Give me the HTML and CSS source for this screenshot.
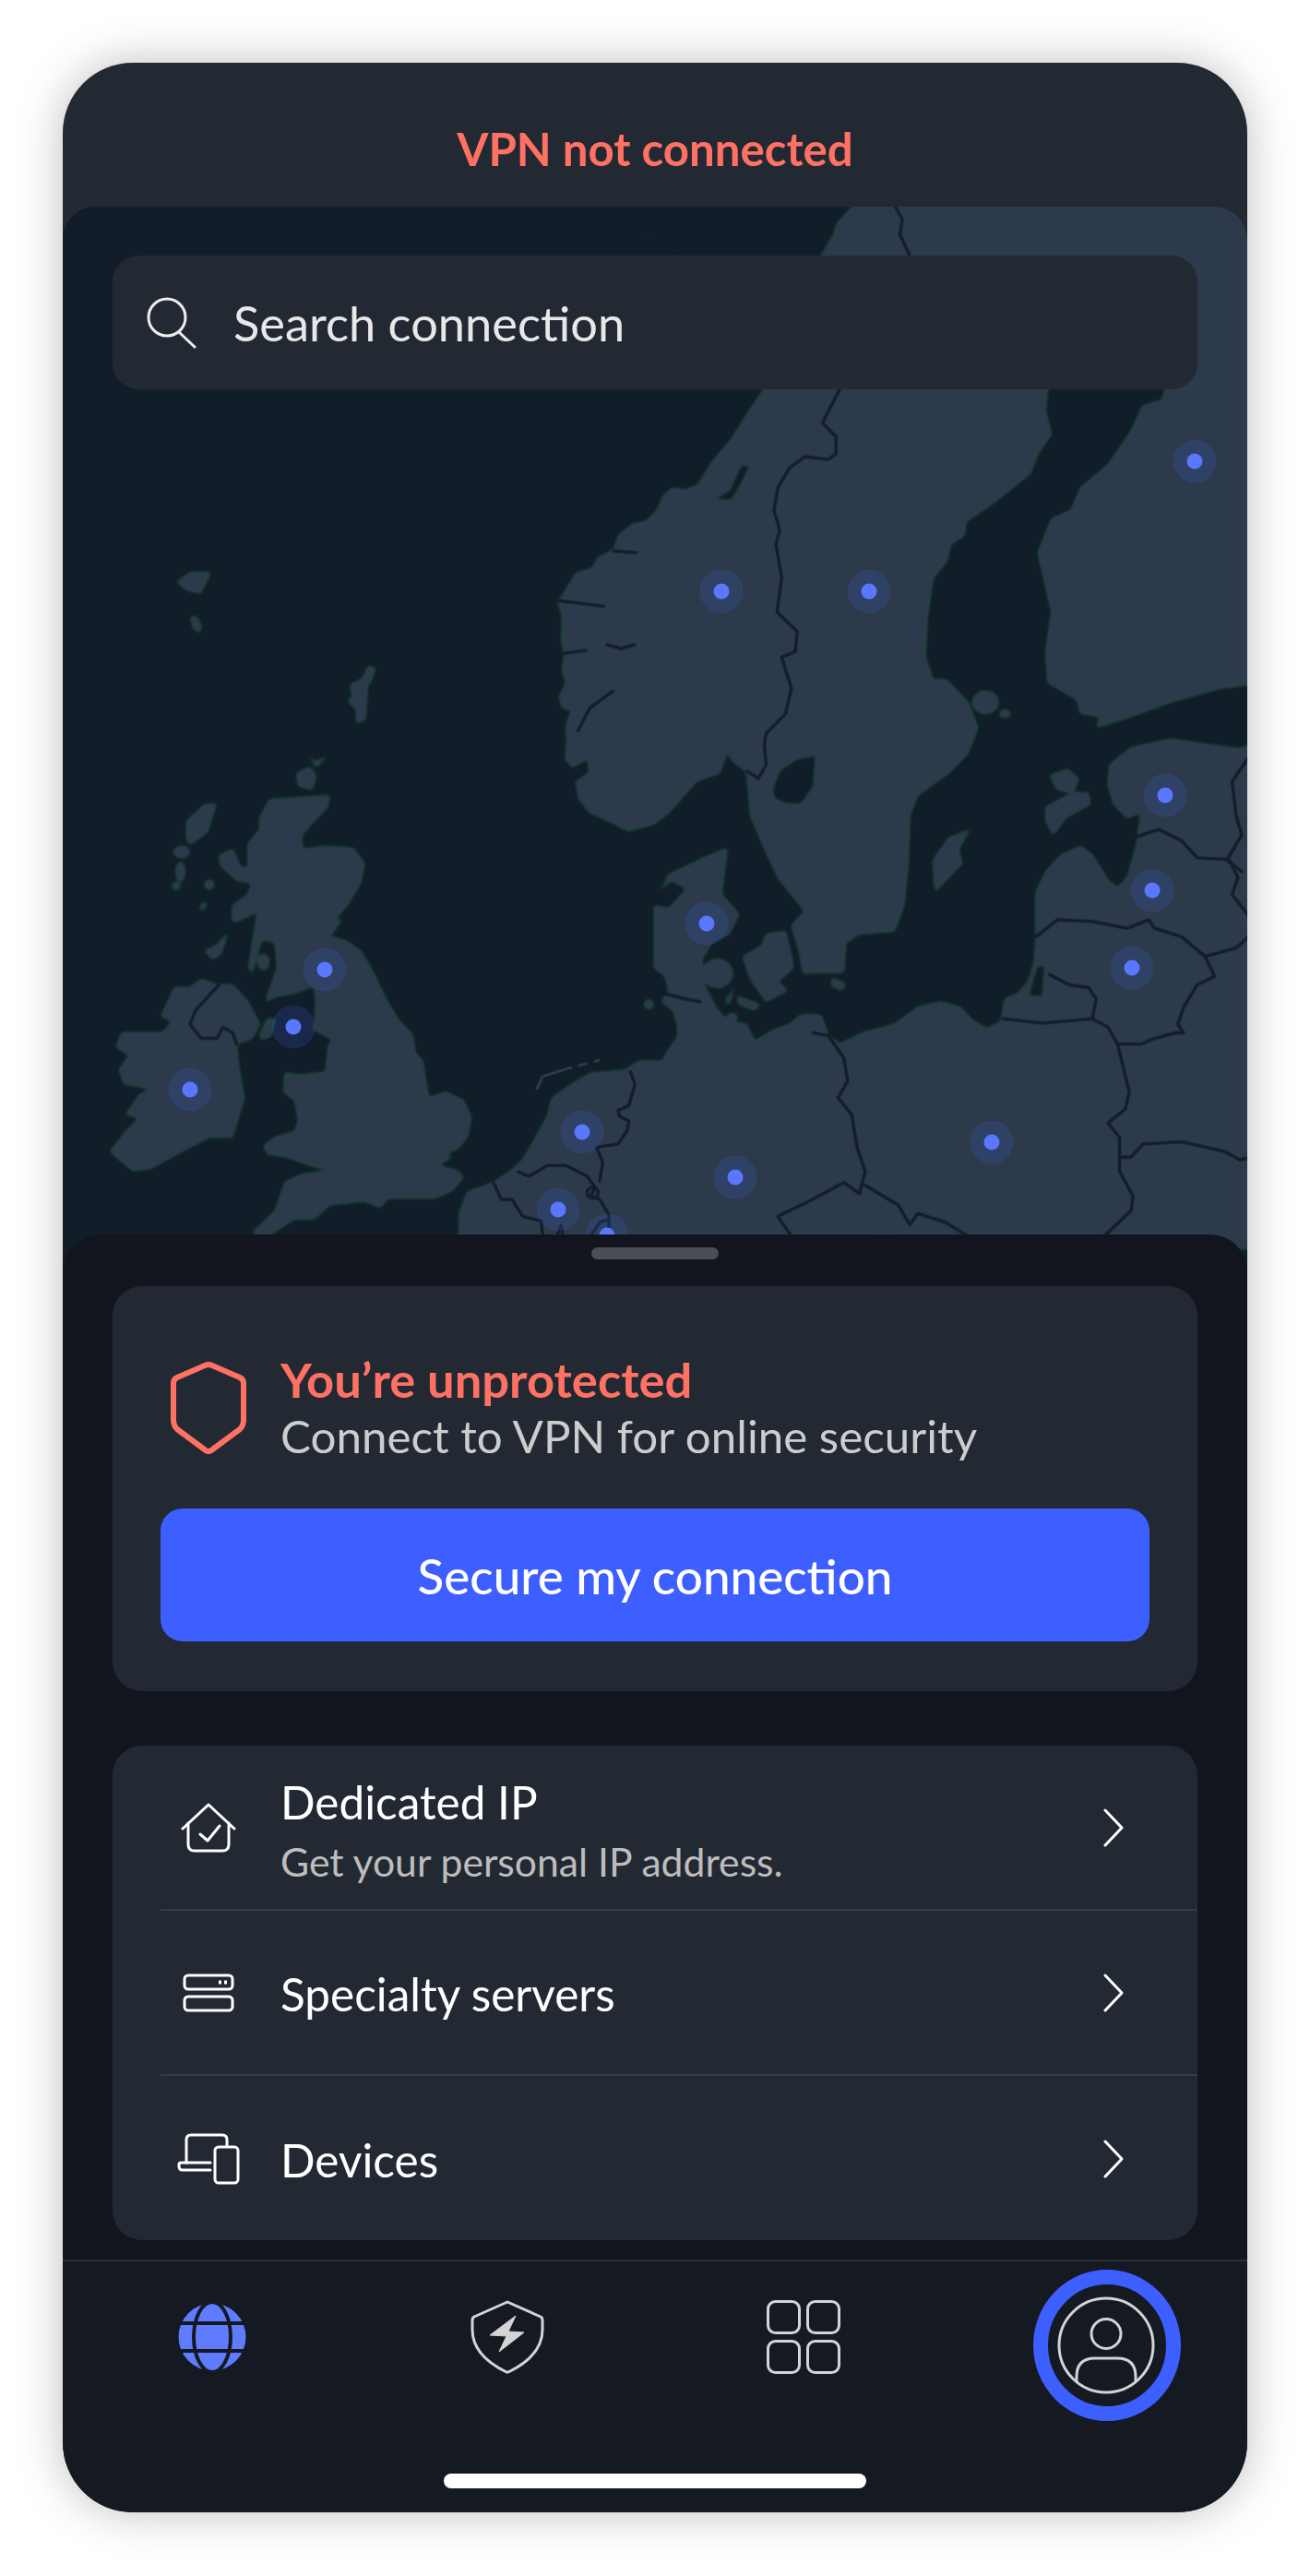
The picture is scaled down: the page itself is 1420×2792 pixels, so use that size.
FILE: index.html
```html
<!DOCTYPE html>
<html lang="en">
<head>
<meta charset="utf-8">
<title>VPN</title>
<link rel="stylesheet" href="styles.css">
</head>
<body>
<main class="phone">
  <header class="status"><span class="status-text">VPN not connected</span></header>

  <section class="map">
    <svg class="map-art" viewBox="68 224 1284 1154" aria-hidden="true">
      <defs>
        <filter id="coast" filterUnits="userSpaceOnUse" x="0" y="100" width="1500" height="1400" color-interpolation-filters="sRGB">
          <feGaussianBlur stdDeviation="2.200"/>
          <feComponentTransfer>
            <feFuncR type="linear" slope="29.4" intercept="-3.07"/>
            <feFuncG type="linear" slope="26.4" intercept="-3.36"/>
            <feFuncB type="linear" slope="23.2" intercept="-4.87"/>
          </feComponentTransfer>
          <feComponentTransfer>
            <feFuncR type="linear" slope=".102" intercept=".0706"/>
            <feFuncG type="linear" slope=".1137" intercept=".1176"/>
            <feFuncB type="linear" slope=".1294" intercept=".1686"/>
          </feComponentTransfer>
        </filter>
      </defs>

      <g filter="url(#coast)">
        <rect class="sea" x="0" y="100" width="1500" height="1400"/>
        <g transform="translate(50,400) scale(.4209,.6122)" class="land">
          <path d="M336 377L370 360L424 360L398 397L365 392Z"/>
          <path d="M372 440L385 437L399 452L397 467L380 460Z"/>
          <path d="M782 560L815 548L830 525L848 530L838 550L828 560L822 620L800 628L798 600L778 590L790 575Z"/>
          <path d="M645 715L680 705L695 720L685 745L650 738Z"/>
          <path d="M672 682L692 695L725 685L695 705Z"/>
          <path d="M575 762L730 755L725 775L690 800L658 825L660 850L720 845L790 848L820 875L810 910L775 950L750 970L720 972L762 975L730 1005L770 1012L810 1030L840 1065L875 1115L905 1150L945 1180L950 1210L970 1225L975 1250L985 1290L1030 1280L1075 1295L1095 1325L1085 1360L1060 1380L1030 1390L1045 1395L1010 1410L1060 1420L1075 1430L1045 1455L1000 1468L880 1468L860 1485L820 1473L730 1480L690 1505L640 1505L570 1535L530 1530L590 1490L615 1440L660 1425L730 1420L680 1410L620 1395L570 1390L560 1375L590 1360L640 1350L650 1330L640 1295L612 1280L615 1245L650 1250L720 1245L728 1195L740 1188L690 1170L695 1120L690 1092L640 1105L595 1110L565 1120L595 1060L590 1015L555 1010L530 1070L522 1060L535 1000L545 960L500 975L480 980L480 950L520 930L530 910L490 905L450 880L445 862L480 850L500 880L520 885L520 840L550 815L550 795Z"/>
          <path d="M362 800L410 770L438 770L415 820L370 842L362 830Z"/>
          <ellipse cx="349" cy="855" rx="20" ry="10"/>
          <ellipse cx="346" cy="890" rx="11" ry="17"/>
          <ellipse cx="335" cy="915" rx="10" ry="7"/>
          <ellipse cx="420" cy="913" rx="12" ry="8"/>
          <path d="M392 955L410 942L414 950L402 958Z"/>
          <path d="M408 1030L440 1020L470 995L450 1035L430 1045Z"/>
          <ellipse cx="560" cy="1050" rx="14" ry="14"/>
          <path d="M550 1180L570 1150L590 1150L580 1180L555 1188Z"/>
          <path d="M300 1140L330 1095L370 1095L400 1080L440 1090L480 1090L520 1120L550 1160L530 1185L490 1195L495 1230L510 1290L480 1360L420 1360L350 1385L270 1415L225 1420L180 1395L165 1385L205 1350L240 1325L205 1320L240 1285L270 1275L200 1265L188 1240L215 1215L180 1200L195 1175L300 1175L325 1155L295 1145Z"/>
          <ellipse cx="1552" cy="1125" rx="12" ry="8"/>
        </g>

        <g transform="translate(480,1100) scale(.3333)">
          <path class="land" d="M50 760L55 640L80 575L165 545L230 500L260 470L290 420L340 330L355 270L420 225L480 190L590 180L640 150L715 150L730 120L765 70L760 0L2700 0L2700 760Z"/>
        </g>

        <g transform="translate(700,400) scale(.4209,.6122)">
          <path class="land" d="M535 -290L1600 -290L1600 1300L520 1300L520 1068L405 1070L395 1030L375 985L410 960L340 900L300 840L270 790L260 712L225 695L210 678L190 715L130 730L60 785L23 805L-45 818L-95 800L-145 785L-173 760L-180 730L-145 715L-150 690L-190 705L-207 690L-203 660L-205 630L-190 603L-215 600L-223 580L-205 555L-215 535L-210 505L-217 480L-215 440L-225 412L-205 390L-180 362L-135 352L-125 335L-83 320L-70 295L-35 275L0 270L30 250L45 225L70 210L100 215L135 205L170 165L220 125L265 75L300 40L456 -206L486 -240L490 -255Z"/>
          <path class="sea" d="M170 232L215 215L245 170L270 170L245 205L222 232Z"/>
          <path class="sea" d="M1040 -10L1335 -10L1340 30L1330 55L1280 65L1250 110L1190 170L1120 210L1095 250L1045 265L1010 325L1030 385L1045 430L1030 500L1035 555L1110 585L1120 610L1170 615L1160 635L1250 615L1350 590L1480 565L1600 555L1600 655L1530 672L1450 665L1350 655L1250 670L1195 700L1190 735L1205 770L1240 795L1275 785L1265 840L1240 900L1215 918L1190 905L1150 860L1120 845L1070 860L1030 890L1005 925L1005 1010L1000 1050L985 1085L960 1105L925 1115L915 1155L880 1168L845 1155L810 1130L760 1120L700 1130L640 1160L560 1175L500 1195L470 1180L455 1150L440 1130L415 1135L370 1160L330 1170L280 1190L240 1190L260 1160L210 1155L180 1130L160 1105L140 1085L150 1050L180 1020L190 1030L240 1010L300 990L370 985L395 1030L405 1070L510 1068L515 1015L550 1000L640 995L665 950L675 880L680 790L700 755L780 715L830 680L855 635L830 590L775 550L740 550L720 510L725 440L740 370L775 340L785 310L820 295L825 270L900 235L990 185L1010 150L1045 115L1030 75Z"/>
          <path class="sea" d="M325 745L345 710L390 690L438 683L432 740L400 770L360 770L330 760Z"/>
          <path class="sea" d="M985 1110L1008 1056L1028 1056L1022 1112Z"/>
          <g class="land">
            <ellipse cx="875" cy="590" rx="33" ry="20"/>
            <ellipse cx="925" cy="610" rx="14" ry="7"/>
            <path d="M1040 720L1085 708L1115 725L1100 750L1060 745Z"/>
            <path d="M1030 775L1100 750L1140 750L1145 770L1080 795L1050 825L1030 800Z"/>
            <path d="M740 870L780 830L835 815L805 850L815 875L745 925Z"/>
            <path d="M22 950L60 955L105 920L65 905L35 925L60 895L150 865L210 848L195 930L240 965L215 1000L170 1015L145 1045L150 1090L165 1110L180 1130L210 1155L260 1160L280 1190L80 1190L85 1165L70 1135L40 1120L60 1100L50 1075L22 1060Z"/>
            <ellipse cx="185" cy="1070" rx="38" ry="25"/>
            <path d="M250 1040L300 1020L310 1000L360 995L375 1040L380 1060L340 1085L365 1100L310 1120L270 1080Z"/>
            <path d="M235 1110L295 1125L280 1135L240 1125Z"/>
            <path d="M205 1120L230 1090L215 1125Z"/>
            <ellipse cx="222" cy="1148" rx="14" ry="7"/>
            <path d="M480 1078L515 1088L505 1100L478 1092Z"/>
            <ellipse cx="8" cy="1125" rx="10" ry="5"/>
          </g>
        </g>
      </g>

      <g class="soft">
        <g transform="translate(480,1100) scale(.3333)">
          <path class="islet" d="M305 243L325 200L420 170M440 165L470 158M492 152L510 146"/>
        </g>
        <g transform="translate(700,400) scale(.4209,.6122)" class="border">
          <path d="M500 35L455 95L490 120L490 150L470 160L410 155L370 175L340 210L330 250L345 285L335 310L350 370L338 430L390 465L385 500L350 510L375 565L360 610L310 645L305 665L310 700L290 725L262 712"/>
          <path d="M45 1105L100 1115L140 1120"/>
          <path d="M1265 828L1320 815L1380 835L1420 865L1495 868L1535 890"/>
          <path d="M1560 680L1510 730L1520 790L1535 825L1500 865L1525 900L1510 930L1560 975"/>
          <path d="M1005 1005L1060 975L1150 978L1240 990L1295 975L1310 990L1380 1005L1440 1040L1520 1025L1560 1000"/>
          <path d="M1440 1040L1465 1075L1420 1090L1385 1130L1370 1160L1385 1175L1365 1175L1310 1185L1275 1195L1215 1195"/>
          <path d="M1040 1072L1090 1090L1140 1095L1160 1115L1150 1150"/>
          <path d="M920 1150L1020 1158L1150 1150L1190 1165L1215 1195L1245 1280L1235 1310L1190 1335L1220 1360L1220 1395L1220 1420L1255 1465L1250 1490L1180 1535"/>
          <path d="M1220 1395L1250 1395L1280 1372L1380 1368L1490 1385L1530 1400L1560 1395"/>
          <path d="M430 1175L470 1180L510 1220L520 1260L495 1290L530 1320L545 1380L565 1420L550 1460"/>
          <path d="M565 1445L650 1480L680 1515L700 1495L770 1510L830 1535"/>
          <path d="M550 1460L510 1440L430 1470L340 1500L375 1535"/>
        </g>
        <g transform="translate(700,224) scale(.5102,.3333)" class="border">
          <path d="M-70 0L-45 25"/>
          <path d="M70 0L85 90L65 155"/>
          <path d="M530 0L545 40L540 90L560 157"/>
          <path d="M-20 85L25 85"/>
        </g>
        <g transform="translate(50,400) scale(.4209,.6122)" class="border">
          <path d="M445 1090L385 1135L370 1160L400 1185L440 1185L455 1165L480 1175L490 1195"/>
          <path d="M1370 640L1400 600L1460 570"/>
          <path d="M1445 488L1480 495L1515 488"/>
          <path d="M1322 410L1435 420"/>
          <path d="M1462 322L1520 325"/>
          <path d="M1335 503L1390 498"/>
        </g>
        <g transform="translate(480,1100) scale(.3333)" class="border">
          <path d="M610 185L625 225L605 295L570 310L575 330L605 345L600 375L570 420L500 430L520 480L510 540"/>
          <path d="M245 510L280 525L340 490L400 490L470 525L495 560L480 590L510 600L540 650L540 720"/>
          <circle cx="487" cy="578" r="18"/>
          <path d="M165 545L190 600L225 600L260 655L320 670L325 720"/>
          <path d="M370 720L385 685L390 720"/>
          <path d="M480 720L510 675L540 665"/>
        </g>
      </g>

      <g class="pin"><circle class="halo" cx="1295" cy="500" r="23"/><circle class="dot" cx="1295" cy="500" r="8.5"/></g>
      <g class="pin"><circle class="halo" cx="782" cy="641" r="23"/><circle class="dot" cx="782" cy="641" r="8.5"/></g>
      <g class="pin"><circle class="halo" cx="942" cy="641" r="23"/><circle class="dot" cx="942" cy="641" r="8.5"/></g>
      <g class="pin"><circle class="halo" cx="1263" cy="862" r="23"/><circle class="dot" cx="1263" cy="862" r="8.5"/></g>
      <g class="pin"><circle class="halo" cx="1249" cy="965" r="23"/><circle class="dot" cx="1249" cy="965" r="8.5"/></g>
      <g class="pin"><circle class="halo" cx="766" cy="1001" r="23"/><circle class="dot" cx="766" cy="1001" r="8.5"/></g>
      <g class="pin"><circle class="halo" cx="1227" cy="1049" r="23"/><circle class="dot" cx="1227" cy="1049" r="8.5"/></g>
      <g class="pin"><circle class="halo" cx="1075" cy="1238" r="23"/><circle class="dot" cx="1075" cy="1238" r="8.5"/></g>
      <g class="pin"><circle class="halo" cx="797" cy="1276" r="23"/><circle class="dot" cx="797" cy="1276" r="8.5"/></g>
      <g class="pin"><circle class="halo" cx="352" cy="1051" r="23"/><circle class="dot" cx="352" cy="1051" r="8.5"/></g>
      <g class="pin"><circle class="halo" cx="318" cy="1113" r="23"/><circle class="dot" cx="318" cy="1113" r="8.5"/></g>
      <g class="pin"><circle class="halo" cx="206" cy="1181" r="23"/><circle class="dot" cx="206" cy="1181" r="8.5"/></g>
      <g class="pin"><circle class="halo" cx="631" cy="1227" r="23"/><circle class="dot" cx="631" cy="1227" r="8.5"/></g>
      <g class="pin"><circle class="halo" cx="605" cy="1311" r="23"/><circle class="dot" cx="605" cy="1311" r="8.5"/></g>
      <g class="pin"><circle class="halo" cx="658" cy="1339" r="23"/><circle class="dot" cx="658" cy="1339" r="8.5"/></g>
      <g class="pin"><circle class="halo" cx="959" cy="1360" r="23"/><circle class="dot" cx="959" cy="1360" r="8.5"/></g>
    </svg>

    <div class="search">
      <svg class="search-icon" viewBox="0 0 54 56" aria-hidden="true">
        <circle cx="22" cy="22" r="20"/>
        <path d="M35 38L52 54"/>
      </svg>
      <span class="search-text">Search connection</span>
    </div>
  </section>

  <section class="sheet">
    <div class="handle"></div>

    <div class="card protect">
      <div class="protect-head">
        <div class="icon-slot">
          <svg class="shield" viewBox="0 0 84 102" aria-hidden="true">
            <path d="M42 4Q44 4 46 5L76 18Q80 20 80 24V64Q80 70 76 74L45 97Q42 99 39 97L8 74Q4 70 4 64V24Q4 20 8 18L38 5Q40 4 42 4Z"/>
          </svg>
        </div>
        <div class="protect-text">
          <div class="protect-title">You’re unprotected</div>
          <div class="protect-sub">Connect to VPN for online security</div>
        </div>
      </div>
      <div class="cta">Secure my connection</div>
    </div>

    <div class="card list">
      <div class="row">
        <div class="icon-slot">
          <svg class="row-icon house" viewBox="0 0 60 54" aria-hidden="true">
            <path d="M2 28L30 2L58 28"/>
            <path d="M8 22V45Q8 52 15 52H45Q52 52 52 45V22"/>
            <path d="M21 34L29 41L42 25"/>
          </svg>
        </div>
        <div class="row-text double">
          <div class="row-title">Dedicated IP</div>
          <div class="row-sub">Get your personal IP address.</div>
        </div>
        <svg class="chev" viewBox="0 0 22 42" aria-hidden="true"><path d="M2 2L20 21L2 40"/></svg>
      </div>
      <div class="row">
        <div class="icon-slot">
          <svg class="row-icon server" viewBox="0 0 56 42" aria-hidden="true">
            <rect x="2" y="2" width="52" height="15" rx="4"/>
            <rect x="2" y="25" width="52" height="15" rx="4"/>
            <path class="server-dots" d="M39 9.500H42M45 9.500H48"/>
          </svg>
        </div>
        <div class="row-text">
          <div class="row-title">Specialty servers</div>
        </div>
        <svg class="chev" viewBox="0 0 22 42" aria-hidden="true"><path d="M2 2L20 21L2 40"/></svg>
      </div>
      <div class="row">
        <div class="icon-slot">
          <svg class="row-icon devices" viewBox="0 0 68 56" aria-hidden="true">
            <path d="M10 32V7Q10 2 15 2H49Q54 2 54 7V13"/>
            <path d="M36 32H4Q2 32 2 34V36Q2 40 6 40H36"/>
            <rect x="41" y="15" width="25" height="39" rx="4"/>
          </svg>
        </div>
        <div class="row-text">
          <div class="row-title">Devices</div>
        </div>
        <svg class="chev" viewBox="0 0 22 42" aria-hidden="true"><path d="M2 2L20 21L2 40"/></svg>
      </div>
    </div>

    <nav class="tabbar">
      <div class="tabs">
        <svg class="tab globe" viewBox="0 0 74 74" aria-hidden="true">
          <circle class="globe-fill" cx="37" cy="37" r="36.500"/>
          <ellipse class="globe-line" cx="37" cy="37" rx="20" ry="38"/>
          <path class="globe-line" d="M0 22H74M0 52H74"/>
        </svg>
        <svg class="tab shield-bolt" viewBox="0 0 80 80" aria-hidden="true">
          <path class="outline" d="M40 2L76 18Q78 19 78 22V32Q78 60 41 78Q40 78 39 78Q2 60 2 32V22Q2 19 4 18Z"/>
          <path class="bolt" d="M49 17L41 34L58 35L31 56L39 39L21 38Z"/>
        </svg>
        <svg class="tab apps" viewBox="0 0 80 80" aria-hidden="true">
          <rect x="1.500" y="1.500" width="34" height="34" rx="8"/>
          <rect x="44.500" y="1.500" width="34" height="34" rx="8"/>
          <rect x="1.500" y="44.500" width="34" height="34" rx="8"/>
          <rect x="44.500" y="44.500" width="34" height="34" rx="8"/>
        </svg>
        <svg class="account" viewBox="0 0 160 164" aria-hidden="true">
          <ellipse class="ring" cx="80" cy="82" rx="72" ry="74"/>
          <circle class="outline" cx="79" cy="82" r="51"/>
          <circle class="outline" cx="79" cy="69.500" r="16"/>
          <path class="outline" d="M47 122V116Q47 96 67 96H91Q111 96 111 116V122"/>
        </svg>
      </div>
      <div class="home-bar"></div>
    </nav>
  </section>
</main>
</body>
</html>
```

FILE: styles.css
```css
* { box-sizing: border-box; }

html, body { margin: 0; background: #fff; }

body {
  font-family: Lato, "Noto Sans", sans-serif;
  padding: 68px 68px 69px;
}

.phone {
  width: 1284px;
  height: 2655px;
  border-radius: 76px;
  overflow: hidden;
  background: #232933;
  box-shadow: 0 0 50px rgba(0, 0, 0, .26);
  display: flex;
  flex-direction: column;
}

.status {
  height: 156px;
  display: flex;
  align-items: center;
  justify-content: center;
  padding-top: 28px;
}

.status-text {
  color: #ff7163;
  font-size: 49.200px;
  font-weight: 700;
}

.map {
  position: relative;
  height: 1154px;
  margin-bottom: -40px;
  padding: 53px 54px 0;
  background: #121e2b;
  border-radius: 36px 36px 0 0;
  overflow: hidden;
}

.map-art {
  position: absolute;
  left: 0;
  top: 0;
  width: 1284px;
  height: 1154px;
}

.soft { filter: blur(.6px); }

.land, .land path, .land ellipse { fill: #2c3b4c; }
.sea { fill: #121e2b; }
.islet { fill: none; stroke: #2c3b4c; stroke-width: 3px; vector-effect: non-scaling-stroke; }
.border path, .border circle {
  fill: none;
  stroke: #121e2b;
  stroke-width: 3.400px;
  stroke-linejoin: round;
  stroke-linecap: round;
  vector-effect: non-scaling-stroke;
}

.halo { fill: #4464e6; fill-opacity: .18; stroke: #5a78ff; stroke-opacity: .1; stroke-width: 1px; }
.dot { fill: #5a78ff; }

.search {
  position: relative;
  height: 145px;
  background: #232933;
  border-radius: 28px;
  display: flex;
  align-items: center;
  padding-left: 37px;
  gap: 40px;
}

.search-icon { width: 54px; height: 56px; flex: none; }
.search-icon circle, .search-icon path { fill: none; stroke: #ededed; stroke-width: 3px; stroke-linecap: round; }

.search-text { color: #e8e8e8; font-size: 52.400px; }

.sheet {
  position: relative;
  flex: 1;
  display: flex;
  flex-direction: column;
  background: #12151e;
  border-radius: 40px 40px 0 0;
  padding-top: 14px;
}

.handle {
  width: 138px;
  height: 13px;
  border-radius: 7px;
  background: #4d4e54;
  align-self: center;
}

.card {
  background: #232933;
  border-radius: 32px;
  margin: 0 54px;
}

.protect {
  margin-top: 29px;
  height: 439px;
  padding: 70px 52px 0;
}

.protect-head { display: flex; align-items: center; }

.icon-slot {
  width: 104px;
  flex: none;
  margin-right: 26px;
  display: flex;
  justify-content: center;
}

.shield { width: 84px; height: 102px; }
.shield path { fill: none; stroke: #ff7163; stroke-width: 6px; stroke-linejoin: round; }

.protect-title { color: #ff7163; font-size: 52.500px; font-weight: 700; line-height: 61px; }
.protect-sub { color: #cdcdcd; font-size: 49.300px; line-height: 62px; }

.cta {
  margin-top: 48px;
  height: 144px;
  border-radius: 24px;
  background: #3e5fff;
  color: #fff;
  font-size: 53px;
  font-weight: 500;
  display: flex;
  align-items: center;
  justify-content: center;
}

.list { margin-top: 59px; height: 536px; }

.row {
  height: 179px;
  margin-left: 52px;
  display: flex;
  align-items: center;
  border-bottom: 2px solid #363b46;
}

.row:last-child { border-bottom: 0; }

.row-text { flex: 1; padding-top: 2px; }
.row-text.double { padding-top: 10px; }
.row-title { color: #fff; font-size: 49.500px; line-height: 62px; }
.row-sub { color: #bdbdbd; font-size: 42.700px; line-height: 64px; margin-top: 2px; }

.row-icon { fill: none; stroke: #fff; stroke-width: 3px; stroke-linecap: round; stroke-linejoin: round; }
.house { width: 60px; height: 54px; }
.server { width: 56px; height: 42px; }
.devices { width: 68px; height: 56px; }
.row-icon .server-dots { stroke-width: 4px; stroke-linecap: butt; }

.chev { width: 22px; height: 42px; margin-right: 80px; flex: none; }
.chev path { fill: none; stroke: #fff; stroke-width: 3px; stroke-linejoin: round; stroke-linecap: round; }

.tabbar {
  margin-top: 21px;
  flex: 1;
  background: #151a22;
  border-top: 2px solid #2a2e38;
  display: flex;
  flex-direction: column;
  align-items: center;
  padding-top: 9px;
}

.tabs {
  width: 100%;
  height: 164px;
  display: grid;
  grid-template-columns: repeat(4, 1fr);
  align-items: center;
  justify-items: center;
}

.tab { margin-bottom: 18px; }
.globe { width: 74px; height: 74px; margin-left: 2px; }
.globe-fill { fill: #5f7cff; }
.globe-line { fill: none; stroke: #151a22; stroke-width: 4px; }
.shield-bolt { width: 80px; height: 80px; }
.outline { fill: none; stroke: #d4d4d4; stroke-width: 3px; stroke-linejoin: round; }
.bolt { fill: #d4d4d4; stroke: #d4d4d4; stroke-width: 1px; stroke-linejoin: round; }
.apps { width: 80px; height: 80px; }
.apps rect { fill: none; stroke: #d4d4d4; stroke-width: 3px; }
.account { width: 160px; height: 164px; margin-left: 16px; }
.ring { fill: none; stroke: #3e5fff; stroke-width: 16px; }

.home-bar {
  margin-top: 57px;
  width: 458px;
  height: 16px;
  border-radius: 8px;
  background: #fff;
}
```
